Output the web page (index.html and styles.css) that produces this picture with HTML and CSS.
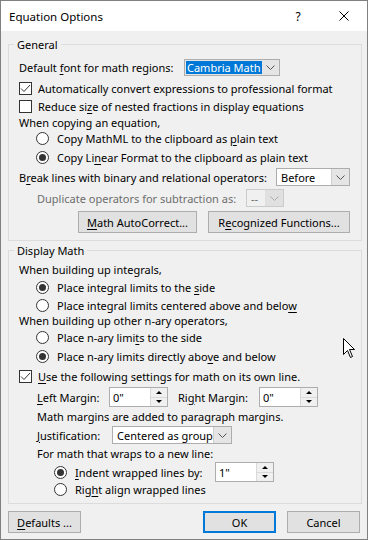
FILE: index.html
```html
<!DOCTYPE html>
<html lang="en">

<head>
  <meta charset="UTF-8">
  <title>Equation Options</title>
  <link rel="stylesheet" href="styles.css">
</head>

<body>
  <div class="window">
    <div class="titlebar">
      <span class="title">Equation Options</span>
      <span class="title-btn">?</span>
      <span class="title-btn">
        <svg width="10" height="10" viewBox="0 0 10 10">
          <path d="M0.5 0.5 L9.5 9.5 M9.5 0.5 L0.5 9.5" stroke="#000" stroke-width="1" fill="none" />
        </svg>
      </span>
    </div>

    <div class="content">
      <!-- General -->
      <div class="group general">
        <span class="group-title">General</span>

        <div class="row combo-row">
          <span class="font-label">Default <u>f</u>ont for math regions:</span>
          <div class="combo font-combo">
            <span class="combo-value"><span class="selected">Cambria Math</span></span>
            <span class="combo-btn">
              <svg width="9" height="5" viewBox="0 0 9 5"><path d="M0.5 0.5 L4.5 4.5 L8.5 0.5" stroke="#555" fill="none" /></svg>
            </span>
          </div>
        </div>

        <div class="row mt4">
          <span class="check">
            <svg width="11" height="11" viewBox="0 0 11 11"><path d="M1 5.5 L4 8.5 L10 2" stroke="#333" stroke-width="1" fill="none" /></svg>
          </span>
          <span>Automatically convert expressions to professional format</span>
        </div>
        <div class="row mt2">
          <span class="check"></span>
          <span>Reduce si<u>z</u>e of nested fractions in display equations</span>
        </div>
        <div class="row">When copying an equation,</div>
        <div class="row indent1">
          <span class="radio"></span>
          <span>Copy MathML to the clipboard as <u>p</u>lain text</span>
        </div>
        <div class="row indent1 mt3">
          <span class="radio on"></span>
          <span>Copy Li<u>n</u>ear Format to the clipboard as plain text</span>
        </div>

        <div class="row combo-row mt3">
          <span>B<u>r</u>eak lines with binary and relational operators:</span>
          <div class="combo break-combo">
            <span class="combo-value">Before</span>
            <span class="combo-btn">
              <svg width="9" height="5" viewBox="0 0 9 5"><path d="M0.5 0.5 L4.5 4.5 L8.5 0.5" stroke="#555" fill="none" /></svg>
            </span>
          </div>
        </div>
        <div class="row combo-row indent2 mt3 disabled">
          <span class="dup-label">Duplicate operators for subtraction as:</span>
          <div class="combo dup-combo">
            <span class="combo-value">--</span>
            <span class="combo-btn">
              <svg width="9" height="5" viewBox="0 0 9 5"><path d="M0.5 0.5 L4.5 4.5 L8.5 0.5" stroke="#aaa" fill="none" /></svg>
            </span>
          </div>
        </div>

        <div class="button-row mt4">
          <span class="btn autocorrect-btn"><u>M</u>ath AutoCorrect...</span>
          <span class="btn functions-btn">R<u>e</u>cognized Functions...</span>
        </div>
      </div>

      <!-- Display Math -->
      <div class="group display">
        <span class="group-title">Display Math</span>

        <div class="row">When building up integrals,</div>
        <div class="row indent1 mt2">
          <span class="radio on"></span>
          <span>Place integral limits to the <u>s</u>ide</span>
        </div>
        <div class="row indent1 mt2">
          <span class="radio"></span>
          <span>Place integral limits centered above and belo<u>w</u></span>
        </div>
        <div class="row mtn1">When building up other n-ary operators,</div>
        <div class="row indent1 mt1">
          <span class="radio"></span>
          <span>Place n-ary limi<u>t</u>s to the side</span>
        </div>
        <div class="row indent1 mt3">
          <span class="radio on"></span>
          <span>Place n-ary limits directly abo<u>v</u>e and below</span>
        </div>

        <div class="row mt4">
          <span class="check">
            <svg width="11" height="11" viewBox="0 0 11 11"><path d="M1 5.5 L4 8.5 L10 2" stroke="#333" stroke-width="1" fill="none" /></svg>
          </span>
          <span><u>U</u>se the following settings for math on its own line.</span>
        </div>

        <div class="row spin-row indent2 mt3">
          <span class="left-label"><u>L</u>eft Margin:</span>
          <div class="spin">
            <span class="spin-value">0"</span>
            <span class="spin-arrows">
              <span class="arrow up"></span>
              <span class="arrow down"></span>
            </span>
          </div>
          <span class="right-label">Ri<u>g</u>ht Margin:</span>
          <div class="spin">
            <span class="spin-value">0"</span>
            <span class="spin-arrows">
              <span class="arrow up"></span>
              <span class="arrow down"></span>
            </span>
          </div>
        </div>

        <div class="row indent2 mt1">Math margins are added to paragraph margins.</div>

        <div class="row combo-row indent2 mt2">
          <span class="justify-label"><u>J</u>ustification:</span>
          <div class="combo justify-combo">
            <span class="combo-value">Centered as group</span>
            <span class="combo-btn">
              <svg width="9" height="5" viewBox="0 0 9 5"><path d="M0.5 0.5 L4.5 4.5 L8.5 0.5" stroke="#555" fill="none" /></svg>
            </span>
          </div>
        </div>

        <div class="row indent2 mt1">For math that wraps to a new line:</div>

        <div class="row spin-row indent3 mt1">
          <span class="radio on"></span>
          <span class="indent-label"><u>I</u>ndent wrapped lines by:</span>
          <div class="spin">
            <span class="spin-value">1"</span>
            <span class="spin-arrows">
              <span class="arrow up"></span>
              <span class="arrow down"></span>
            </span>
          </div>
        </div>
        <div class="row indent3 mtn1">
          <span class="radio"></span>
          <span>Rig<u>h</u>t align wrapped lines</span>
        </div>
      </div>

      <div class="footer">
        <span class="btn"><u>D</u>efaults ...</span>
        <div class="footer-right">
          <span class="btn default">OK</span>
          <span class="btn">Cancel</span>
        </div>
      </div>
    </div>

    <svg class="cursor" width="13" height="21" viewBox="0 0 13 21">
      <path d="M0.5 0.5 L0.5 16.5 L4.5 12.5 L7.5 19.5 L9.5 18.5 L6.5 11.5 L11.5 11.5 Z" fill="#fff" stroke="#000" stroke-width="1" />
    </svg>
  </div>
</body>

</html>
```

FILE: styles.css
```css
* {
  box-sizing: border-box;
}

body {
  margin: 0;
  font-family: "Noto Sans", sans-serif;
  font-size: 11px;
  color: #000;
}

u {
  text-decoration-thickness: 1px;
  text-underline-offset: 2px;
}

.window {
  position: relative;
  width: 368px;
  height: 540px;
  border: 1px solid #808080;
  background: #f0f0f0;
}

.titlebar {
  display: flex;
  align-items: center;
  height: 30px;
  background: #fff;
}

.title {
  flex: 1;
  padding-left: 8px;
  font-size: 11.5px;
}

.title-btn {
  width: 46px;
  height: 30px;
  display: flex;
  align-items: center;
  justify-content: center;
  font-size: 12px;
}

.content {
  padding: 13px 5px 0 7px;
}

.group {
  position: relative;
  border: 1px solid #dcdcdc;
  padding: 14px 11px 7px 10px;
}

.group.display {
  margin-top: 9px;
  padding-top: 10px;
  padding-bottom: 6px;
}

.group-title {
  position: absolute;
  top: -8px;
  left: 5px;
  padding: 0 3px;
  line-height: 16px;
  background: #f0f0f0;
}

.row {
  display: flex;
  align-items: center;
  height: 16px;
  white-space: nowrap;
}

.combo-row {
  height: 18px;
}

.general .combo-row:first-of-type {
  height: 17px;
}

.spin-row {
  height: 20px;
}

.indent1 {
  padding-left: 17px;
}

.indent2 {
  padding-left: 18px;
}

.indent3 {
  padding-left: 35px;
}

.mt1 { margin-top: 1px; }
.mt2 { margin-top: 2px; }
.mt3 { margin-top: 3px; }
.mt4 { margin-top: 4px; }
.mtn1 { margin-top: -1px; }

.check {
  flex: none;
  width: 13px;
  height: 13px;
  margin-right: 6px;
  border: 1px solid #333;
  background: #fff;
  display: flex;
  align-items: center;
  justify-content: center;
}

.radio {
  flex: none;
  width: 13px;
  height: 13px;
  margin-right: 8px;
  border: 1px solid #333;
  border-radius: 50%;
  background: #fff;
  display: flex;
  align-items: center;
  justify-content: center;
}

.radio.on::after {
  content: "";
  width: 7px;
  height: 7px;
  border-radius: 50%;
  background: #333;
}

.combo {
  display: flex;
  height: 100%;
  border: 1px solid #adadad;
  background: #fff;
}

.combo-value {
  flex: 1;
  display: flex;
  align-items: center;
  padding-left: 4px;
  overflow: hidden;
}

.combo-btn {
  flex: none;
  width: 18px;
  display: flex;
  align-items: center;
  justify-content: center;
  background: #e5e5e5;
  border-left: 1px solid #d0d0d0;
}

.font-label {
  width: 165px;
}

.font-combo {
  width: 96px;
  background: #e5e5e5;
}

.font-combo .combo-value {
  padding: 1px 0 1px 1px;
}

.selected {
  display: flex;
  align-items: center;
  width: 100%;
  height: 100%;
  padding-left: 1px;
  background: #0078d7;
  color: #fff;
}

.font-combo .combo-btn {
  width: 17px;
  border-left: none;
}

.break-combo {
  width: 74px;
  margin-left: auto;
}

.disabled {
  color: #6d6d6d;
}

.dup-label {
  width: 209px;
}

.dup-combo {
  width: 38px;
  border-color: #ccc;
  background: #f0f0f0;
  color: #6d6d6d;
}

.dup-combo .combo-btn {
  background: #e0e0e0;
  border-left-color: #e0e0e0;
}

.button-row {
  display: flex;
  justify-content: flex-end;
  gap: 11px;
}

.btn {
  display: flex;
  align-items: center;
  justify-content: center;
  width: 73px;
  height: 22px;
  border: 1px solid #adadad;
  background: #e1e1e1;
}

.autocorrect-btn {
  width: 119px;
}

.functions-btn {
  width: 142px;
}

.btn.default {
  border: 2px solid #0078d7;
}

.left-label {
  width: 72px;
}

.right-label {
  width: 81px;
  margin-left: 10px;
}

.justify-label {
  width: 75px;
}

.justify-combo {
  width: 120px;
}

.indent-label {
  width: 140px;
}

.spin {
  display: flex;
  width: 59px;
  height: 20px;
  border: 1px solid #adadad;
  background: #fff;
}

.spin-value {
  flex: 1;
  display: flex;
  align-items: center;
  padding-left: 3px;
}

.spin-arrows {
  flex: none;
  width: 17px;
  display: flex;
  flex-direction: column;
  border-left: 1px solid #d9d9d9;
}

.arrow {
  flex: 1;
  display: flex;
  align-items: center;
  justify-content: center;
  background: #f0f0f0;
}

.arrow.up {
  border-bottom: 1px solid #d9d9d9;
}

.arrow.up::after {
  content: "";
  border-left: 3px solid transparent;
  border-right: 3px solid transparent;
  border-bottom: 3px solid #000;
}

.arrow.down::after {
  content: "";
  border-left: 3px solid transparent;
  border-right: 3px solid transparent;
  border-top: 3px solid #000;
}

.footer {
  display: flex;
  margin-top: 7px;
  padding-right: 2px;
}

.footer-right {
  display: flex;
  gap: 11px;
  margin-left: auto;
}

.cursor {
  position: absolute;
  left: 342px;
  top: 337px;
}
```
